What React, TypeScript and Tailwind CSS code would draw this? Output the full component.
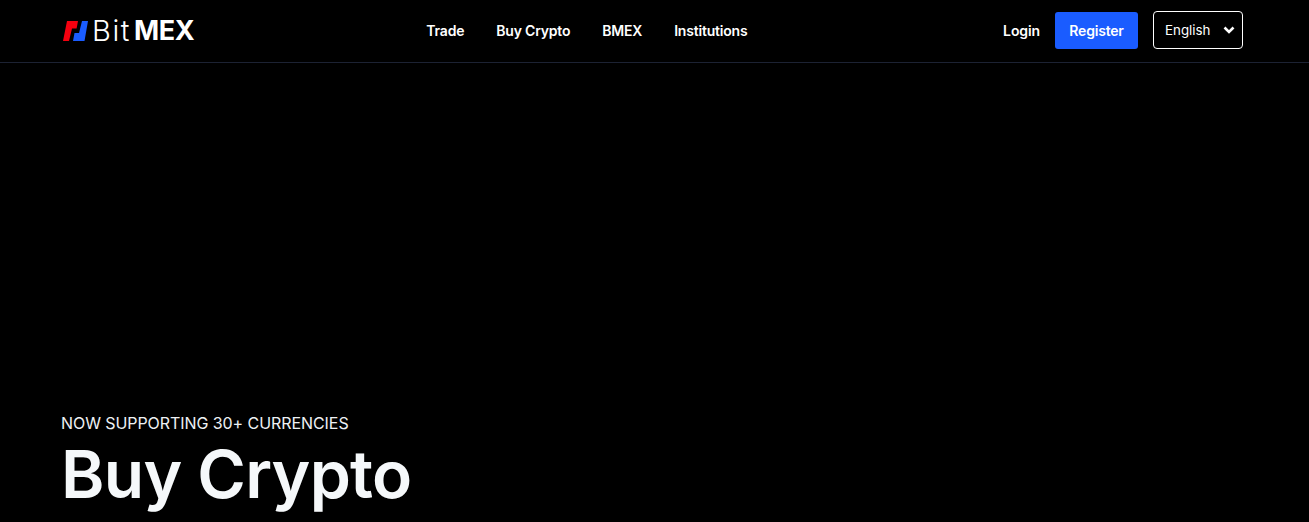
export default function App() {
  return (
    <div className="h-[522px] w-full overflow-hidden bg-black text-white" style={{ fontFamily: 'Inter, "Liberation Sans", sans-serif' }}>
      <header className="flex h-[63px] items-center border-b border-[#1c2233] pb-px pl-[61px] pr-[66px]">
        <a className="flex items-center">
          <svg width="27" height="20" viewBox="0 0 27 20" className="ml-px mr-[3px]">
            <path d="M5 0H16L14.6 7.5H10L7 20H1Z" fill="#f5000f" />
            <path d="M20 0H26L22.5 20H11L12.5 12H17Z" fill="#1a5cff" />
          </svg>
          <span className="text-[29px] leading-[30px] font-light tracking-[1.6px]">Bit</span>
          <span className="ml-[3px] text-[27px] leading-[30px] font-bold tracking-[-0.4px]">MEX</span>
        </a>
        <nav className="ml-[232px] flex items-center gap-8 text-sm font-semibold tracking-[-0.2px]">
          <a>Trade</a>
          <a>Buy Crypto</a>
          <a>BMEX</a>
          <a>Institutions</a>
        </nav>
        <div className="ml-auto flex items-center">
          <a className="text-sm font-semibold tracking-[-0.1px]">Login</a>
          <button className="ml-[15px] h-[37px] w-[83px] rounded-[3px] bg-[#1a5cff] text-sm font-semibold tracking-[-0.2px]">Register</button>
          <div className="mb-px ml-[15px] flex h-[38px] w-[90px] items-center justify-between rounded-[4px] border border-white pl-[11px] pr-[7px] text-[13.33px]">
            <span className="pt-px">English</span>
            <svg width="12" height="8" viewBox="0 0 12 8" fill="none" stroke="white" strokeWidth="2.6">
              <path d="M1.5 1.5L6 6L10.5 1.5" />
            </svg>
          </div>
        </div>
      </header>
      <section className="pl-[61px] pt-[349px]">
        <p className="text-base leading-[22px] tracking-[-0.07px] text-[#eef1f4]">NOW SUPPORTING 30+ CURRENCIES</p>
        <h1 className="text-[66px] leading-[80px] font-semibold tracking-[-0.77px] text-[#f5f8fa]">Buy Crypto</h1>
      </section>
    </div>
  );
}
